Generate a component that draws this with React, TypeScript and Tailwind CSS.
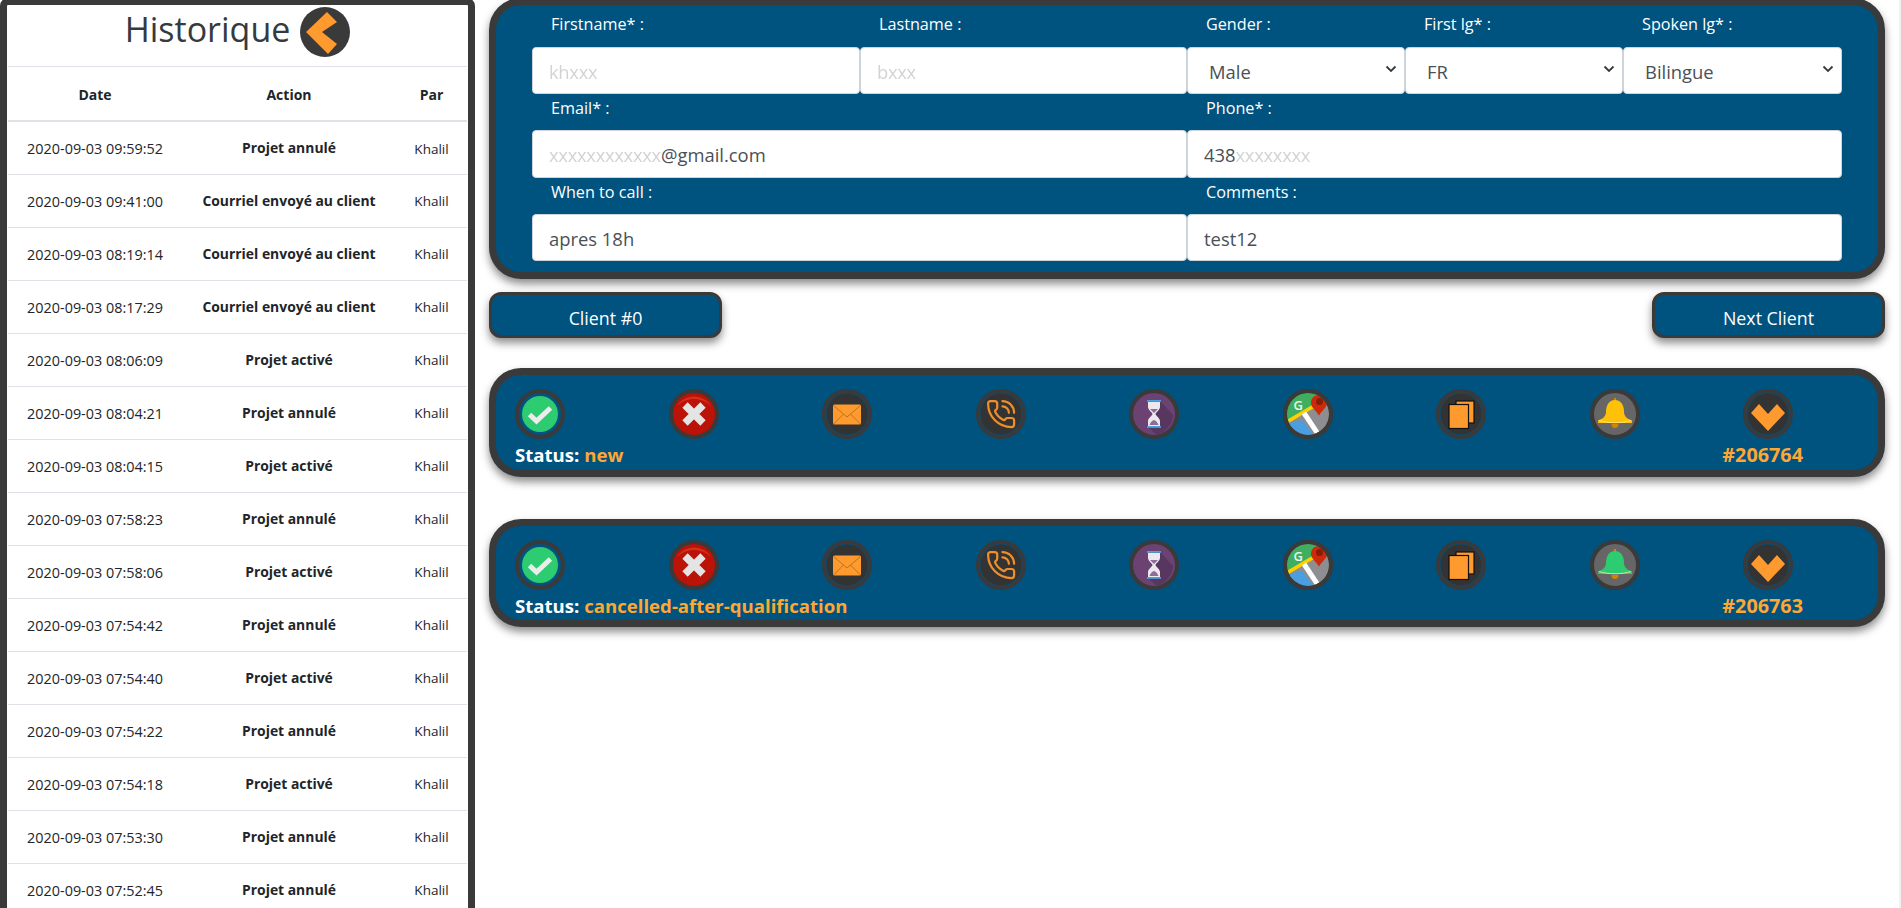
import React from "react";

const ORANGE = "#ff9a2e";

function Ring({ fill, ring = false, children }: { fill?: string; ring?: boolean; children?: React.ReactNode }) {
  return (
    <svg width="50" height="50" viewBox="0 0 50 50" className="block shrink-0">
      <circle cx="25" cy="25" r="23" fill={fill ?? "none"} stroke="#3a3a3a" strokeWidth="4" />
      {ring && <circle cx="25" cy="25" r="21" fill="none" stroke="#00527f" strokeWidth="0.8" />}
      {children}
    </svg>
  );
}

const CheckIcon = () => (
  <Ring>
    <circle cx="25" cy="25" r="18" fill="#2ecc71" />
    <path d="M14.5 25.5l7 6.5 14-13" fill="none" stroke="#ececec" strokeWidth="5" />
  </Ring>
);

const CrossIcon = () => (
  <Ring fill="#b81208">
    <circle cx="25" cy="25" r="20.5" fill="#bb1308" />
    <path d="M8 17a20 20 0 0 1 34 0a24 24 0 0 0-34 0z" fill="#d4301c" />
    <path d="M16 16l18 18M34 16L16 34" stroke="#e4e4e4" strokeWidth="7.5" />
  </Ring>
);

const MailIcon = () => (
  <Ring fill="#333333" ring>
    <rect x="11" y="15.5" width="28" height="20" rx="1.5" fill={ORANGE} />
    <path d="M11.5 16.5L25 28l13.5-11.5M11.5 35l10-10M38.5 35l-10-10" fill="none" stroke="#b87424" strokeWidth="1" />
  </Ring>
);

const PhoneIcon = () => (
  <Ring fill="#333333" ring>
    <g transform="translate(9.5 9.5) scale(1.3)" fill="none" stroke="#ee8f2b" strokeWidth="1.7" strokeLinecap="round" strokeLinejoin="round">
      <path d="M13 2a9 9 0 0 1 9 9" />
      <path d="M13 6a5 5 0 0 1 5 5" />
      <path d="M13.832 16.568a1 1 0 0 0 1.213-.303l.355-.465A2 2 0 0 1 17 15h3a2 2 0 0 1 2 2v3a2 2 0 0 1-2 2A18 18 0 0 1 2 4a2 2 0 0 1 2-2h3a2 2 0 0 1 2 2v3a2 2 0 0 1-.8 1.6l-.468.351a1 1 0 0 0-.292 1.233 14 14 0 0 0 6.392 6.384" />
    </g>
  </Ring>
);

const HourglassIcon = () => (
  <Ring fill="#6b4272">
    <path d="M30 11L44 26A21 21 0 0 1 27 45.5L18 37z" fill="#573660" />
    <rect x="18" y="11" width="14" height="1.8" fill="#4aa3df" />
    <rect x="18" y="37" width="14" height="1.8" fill="#4aa3df" />
    <path d="M19 13h12v5c0 3-4 5-4.5 7 .5 2 4.5 4 4.5 7v5H19v-5c0-3 4-5 4.5-7-.5-2-4.5-4-4.5-7z" fill="#ece8ee" />
    <path d="M21 20h8l-4 4zM20.5 36c1-3 3-4.500 4.500-5 1.500.5 3.500 2 4.500 5z" fill="#8e6d96" />
  </Ring>
);

const MapIcon = () => (
  <Ring fill="#8d8d92">
    <clipPath id="mapclip"><circle cx="25" cy="25" r="21" /></clipPath>
    <g clipPath="url(#mapclip)">
      <rect width="50" height="50" fill="#8d8d92" />
      <path d="M0 0h40L0 38z" fill="#3fae5f" />
      <path d="M0 37L38 10v-20h-40z" fill="#3fae5f" />
      <path d="M0 50V35l19-4 15 19z" fill="#4a9fe0" />
      <path d="M2 34L36 14" stroke="#ffcf00" strokeWidth="3.6" />
      <path d="M21 24l16 24" stroke="#ffffff" strokeWidth="5" />
      <text x="10.5" y="21" fontSize="13" fontFamily="'Open Sans', sans-serif" fontWeight="600" fill="#eef7ee">G</text>
    </g>
    <path d="M36 6c5 0 8 3.500 8 8 0 4.500-5 7.500-8 12.500-3-5-8-8-8-12.500C28 9.500 31 6 36 6z" fill="#cc2a0a" />
    <circle cx="36.500" cy="12.500" r="3.500" fill="#8a1c05" />
    <circle cx="25" cy="25" r="23" fill="none" stroke="#3a3a3a" strokeWidth="4" />
  </Ring>
);

const CopyIcon = () => (
  <Ring fill="#333333" ring>
    <rect x="20" y="12" width="18" height="22" fill={ORANGE} stroke="#111" strokeWidth="1.2" />
    <rect x="13" y="15.500" width="19.500" height="24" fill={ORANGE} stroke="#111" strokeWidth="1.200" />
  </Ring>
);

const BellIcon = ({ color }: { color: string }) => (
  <Ring fill="#666666">
    <rect x="24" y="9" width="2" height="4" fill="#d08a00" />
    <path d="M25 11c6 0 9 5 9 12 0 4 3 7 8 8.500V34H8v-2.500c5-1.500 8-4.500 8-8.500 0-7 3-12 9-12z" fill={color} />
    <path d="M9 31.500c9 3 23 3 32 0" fill="none" stroke="#ffe9a0" strokeWidth="1" opacity="0.8" />
    <path d="M21.500 35h7c0 3-1.500 4-3.500 4s-3.500-1-3.500-4z" fill="#d48500" />
  </Ring>
);

const DownIcon = () => (
  <Ring fill="#333333" ring>
    <path d="M8 24l8-9 9 10 9-10 8 9-17 18z" fill={ORANGE} />
  </Ring>
);

const BackIcon = () => (
  <svg width="50" height="50" viewBox="0 0 50 50" className="block shrink-0">
    <circle cx="25" cy="25" r="25" fill="#3a3a3a" />
    <path d="M27 5l10 10-15 10 15 12-9 10L6 25z" fill={ORANGE} />
  </svg>
);

const Label = ({ text, className }: { text: string; className: string }) => (
  <div className={`pl-[19px] text-[16.2px] leading-6 text-white ${className}`}>{text}</div>
);

const boxCls =
  "flex items-center rounded-[4px] border border-[#ced4da] bg-white pt-[2px] text-[18.4px] text-[#495057] pl-[16px]";

const Mask = ({ children }: { children: React.ReactNode }) => (
  <span className="tracking-[-0.3px] opacity-25 blur-[0.4px]">{children}</span>
);

const Field = ({ className, children }: { className: string; children: React.ReactNode }) => (
  <div className={`${boxCls} ${className}`}>{children}</div>
);

const Select = ({ value, className }: { value: string; className: string }) => (
  <div className={`${boxCls} justify-between pl-[21px] pr-[7px] ${className}`}>
    <span>{value}</span>
    <svg width="12" height="12" viewBox="0 0 12 12" className="-mt-[6px]">
      <path d="M1.500 3.500L6 8l4.500-4.500" fill="none" stroke="#343a40" strokeWidth="1.800" />
    </svg>
  </div>
);

const ClientButton = ({ text }: { text: string }) => (
  <button className="h-[46px] w-[233px] rounded-[12px] border-[3px] border-[#3a3a3a] bg-[#00527f] pt-[6px] text-[17.8px] text-white shadow-[0_5px_8px_rgba(0,0,0,0.45)]">
    {text}
  </button>
);

function ClientBar({ status, id, bell, className }: { status: string; id: string; bell: string; className: string }) {
  const icons = [
    <CheckIcon />,
    <CrossIcon />,
    <MailIcon />,
    <PhoneIcon />,
    <HourglassIcon />,
    <MapIcon />,
    <CopyIcon />,
    <BellIcon color={bell} />,
    <DownIcon />,
  ];
  return (
    <div className={`rounded-[32px] border-[7px] border-[#3a3a3a] bg-[#00527f] shadow-[0_5px_9px_rgba(0,0,0,0.45)] ${className}`}>
      <div className="grid grid-cols-9 pt-[14px]">
        {icons.map((icon, i) => (
          <div key={i} className="pl-[19px]">{icon}</div>
        ))}
      </div>
      <div className="mt-[4px] flex justify-between pl-[19px] pr-[75px] text-[18.6px] font-bold leading-6 text-white">
        <span>
          Status: <span className="text-[#ffa733]">{status}</span>
        </span>
        <span className="text-[19.8px] text-[#ffa733]">{id}</span>
      </div>
    </div>
  );
}

const rows: [string, string][] = [
  ["2020-09-03 09:59:52", "Projet annulé"],
  ["2020-09-03 09:41:00", "Courriel envoyé au client"],
  ["2020-09-03 08:19:14", "Courriel envoyé au client"],
  ["2020-09-03 08:17:29", "Courriel envoyé au client"],
  ["2020-09-03 08:06:09", "Projet activé"],
  ["2020-09-03 08:04:21", "Projet annulé"],
  ["2020-09-03 08:04:15", "Projet activé"],
  ["2020-09-03 07:58:23", "Projet annulé"],
  ["2020-09-03 07:58:06", "Projet activé"],
  ["2020-09-03 07:54:42", "Projet annulé"],
  ["2020-09-03 07:54:40", "Projet activé"],
  ["2020-09-03 07:54:22", "Projet annulé"],
  ["2020-09-03 07:54:18", "Projet activé"],
  ["2020-09-03 07:53:30", "Projet annulé"],
  ["2020-09-03 07:52:45", "Projet annulé"],
];

export default function App() {
  return (
    <div className="flex h-[908px] overflow-hidden bg-white font-['Open_Sans','Liberation_Sans',sans-serif]">
      <aside className="-mt-[2px] h-[930px] w-[475px] shrink-0 rounded-[8px] border-[7px] border-[#3a3a3a] bg-white px-[1px]">
        <div className="flex h-[62px] items-center justify-center gap-[10px] border-b border-[#dee2e6] pb-[7px] text-[34px] font-medium text-[#343a40]">
          <span className="pb-[5px]">Historique</span>
          <BackIcon />
        </div>
        <table className="w-[459px] table-fixed border-collapse text-center text-[#212529]">
          <colgroup>
            <col className="w-[174px]" />
            <col className="w-[214px]" />
            <col className="w-[71px]" />
          </colgroup>
          <thead>
            <tr className="h-[54px] border-b-2 border-[#dee2e6] text-[14px] font-bold">
              <th className="pt-[2px]">Date</th>
              <th className="pt-[2px]">Action</th>
              <th className="pt-[2px]">Par</th>
            </tr>
          </thead>
          <tbody className="text-[13.9px]">
            {rows.map(([d, a], i) => (
              <tr key={i} className="h-[53px] border-b border-[#dee2e6]">
                <td className="pt-[2px] text-[14.4px]">{d}</td>
                <td className="pt-[2px] font-bold">{a}</td>
                <td className="pt-[2px] text-[13.5px]">Khalil</td>
              </tr>
            ))}
          </tbody>
        </table>
      </aside>

      <main className="ml-[14px] w-[1396px] shrink-0">
        <section className="-mt-[2px] rounded-[32px] border-[7px] border-[#3a3a3a] bg-[#00527f] px-[36px] pt-[7px] pb-[11px] shadow-[0_5px_9px_rgba(0,0,0,0.45)]">
          <div className="flex h-[35px]">
            <Label text="Firstname* :" className="w-[328px]" />
            <Label text="Lastname :" className="w-[327px]" />
            <Label text="Gender :" className="w-[218px]" />
            <Label text="First lg* :" className="w-[218px]" />
            <Label text="Spoken lg* :" className="w-[219px]" />
          </div>
          <div className="flex h-[47px]">
            <Field className="w-[328px]"><Mask>khxxx</Mask></Field>
            <Field className="w-[327px]"><Mask>bxxx</Mask></Field>
            <Select value="Male" className="w-[218px]" />
            <Select value="FR" className="w-[218px]" />
            <Select value="Bilingue" className="w-[219px]" />
          </div>
          <div className="flex h-[36px] pt-[2px]">
            <Label text="Email* :" className="w-[655px]" />
            <Label text="Phone* :" className="w-[655px]" />
          </div>
          <div className="flex h-[48px]">
            <Field className="w-[655px]"><Mask>xxxxxxxxxxxx</Mask>@gmail.com</Field>
            <Field className="w-[655px]">438<Mask>xxxxxxxx</Mask></Field>
          </div>
          <div className="flex h-[36px] pt-[2px]">
            <Label text="When to call :" className="w-[655px]" />
            <Label text="Comments :" className="w-[655px]" />
          </div>
          <div className="flex h-[47px]">
            <Field className="w-[655px]">apres 18h</Field>
            <Field className="w-[655px]">test12</Field>
          </div>
        </section>

        <div className="mt-[13px] flex justify-between">
          <ClientButton text="Client #0" />
          <ClientButton text="Next Client" />
        </div>

        <ClientBar className="mt-[30px] h-[109px]" status="new" id="#206764" bell="#ffc107" />
        <ClientBar className="mt-[42px] h-[108px]" status="cancelled-after-qualification" id="#206763" bell="#2ecc71" />
      </main>
      <div className="ml-auto h-full w-[2px] bg-[#f1f1f1]" />
    </div>
  );
}
